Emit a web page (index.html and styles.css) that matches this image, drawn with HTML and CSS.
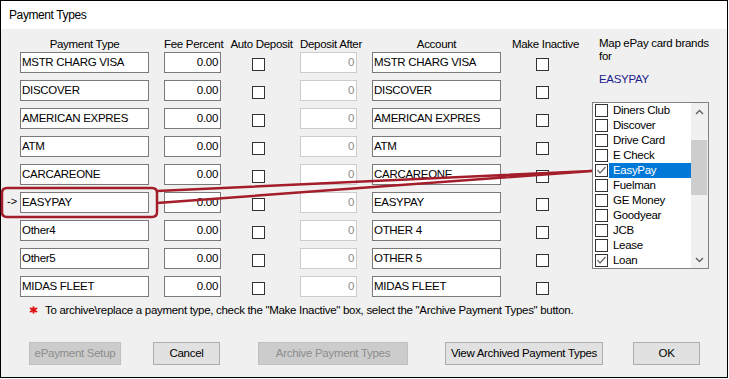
FILE: index.html
```html
<!DOCTYPE html>
<html>
<head>
<meta charset="utf-8">
<link rel="stylesheet" href="styles.css">
</head>
<body>
<div class="window">
  <div class="titlebar">Payment Types</div>
  <div class="content">
    <div class="main">
      <div class="grid">
        <div class="hd c-type">Payment Type</div>
        <div class="hd c-fee">Fee Percent</div>
        <div class="hd c-auto hd-shift">Auto Deposit</div>
        <div class="hd c-dep">Deposit After</div>
        <div class="hd c-acct">Account</div>
        <div class="hd c-inact hd-shift">Make Inactive</div>

        <div class="tb c-type">MSTR CHARG VISA</div><div class="tb num c-fee">0.00</div><div class="cb c-auto"></div><div class="tb num dis c-dep">0</div><div class="tb c-acct">MSTR CHARG VISA</div><div class="cb c-inact"></div>
        <div class="tb c-type">DISCOVER</div><div class="tb num c-fee">0.00</div><div class="cb c-auto"></div><div class="tb num dis c-dep">0</div><div class="tb c-acct">DISCOVER</div><div class="cb c-inact"></div>
        <div class="tb c-type">AMERICAN EXPRES</div><div class="tb num c-fee">0.00</div><div class="cb c-auto"></div><div class="tb num dis c-dep">0</div><div class="tb c-acct">AMERICAN EXPRES</div><div class="cb c-inact"></div>
        <div class="tb c-type">ATM</div><div class="tb num c-fee">0.00</div><div class="cb c-auto"></div><div class="tb num dis c-dep">0</div><div class="tb c-acct">ATM</div><div class="cb c-inact"></div>
        <div class="tb c-type">CARCAREONE</div><div class="tb num c-fee">0.00</div><div class="cb c-auto"></div><div class="tb num dis c-dep">0</div><div class="tb c-acct">CARCAREONE</div><div class="cb c-inact"></div>
        <div class="arrow c-arrow">-&gt;</div><div class="tb c-type">EASYPAY</div><div class="tb num c-fee">0.00</div><div class="cb c-auto"></div><div class="tb num dis c-dep">0</div><div class="tb c-acct">EASYPAY</div><div class="cb c-inact"></div>
        <div class="tb c-type">Other4</div><div class="tb num c-fee">0.00</div><div class="cb c-auto"></div><div class="tb num dis c-dep">0</div><div class="tb c-acct">OTHER 4</div><div class="cb c-inact"></div>
        <div class="tb c-type">Other5</div><div class="tb num c-fee">0.00</div><div class="cb c-auto"></div><div class="tb num dis c-dep">0</div><div class="tb c-acct">OTHER 5</div><div class="cb c-inact"></div>
        <div class="tb c-type">MIDAS FLEET</div><div class="tb num c-fee">0.00</div><div class="cb c-auto"></div><div class="tb num dis c-dep">0</div><div class="tb c-acct">MIDAS FLEET</div><div class="cb c-inact"></div>
      </div>

      <div class="brands">
        <div class="brands-label">Map ePay card brands<br>for</div>
        <div class="brands-name">EASYPAY</div>
        <div class="list">
          <div class="items">
            <div class="item"><span class="lcb"></span><span class="lbl">Diners Club</span></div>
            <div class="item"><span class="lcb"></span><span class="lbl">Discover</span></div>
            <div class="item"><span class="lcb"></span><span class="lbl">Drive Card</span></div>
            <div class="item"><span class="lcb"></span><span class="lbl">E Check</span></div>
            <div class="item sel"><span class="lcb"><svg class="chk" width="11" height="11" viewBox="0 0 11 11"><polyline points="1.5,5 4,8 9.5,2" /></svg></span><span class="lbl">EasyPay</span></div>
            <div class="item"><span class="lcb"></span><span class="lbl">Fuelman</span></div>
            <div class="item"><span class="lcb"></span><span class="lbl">GE Money</span></div>
            <div class="item"><span class="lcb"></span><span class="lbl">Goodyear</span></div>
            <div class="item"><span class="lcb"></span><span class="lbl">JCB</span></div>
            <div class="item"><span class="lcb"></span><span class="lbl">Lease</span></div>
            <div class="item"><span class="lcb"><svg class="chk" width="11" height="11" viewBox="0 0 11 11"><polyline points="1.5,5 4,8 9.5,2" /></svg></span><span class="lbl">Loan</span></div>
          </div>
          <div class="sb">
            <div class="sb-btn"><svg width="9" height="6" viewBox="0 0 9 6"><polyline points="1,5 4.5,1.5 8,5" /></svg></div>
            <div class="sb-track"><div class="sb-thumb"></div></div>
            <div class="sb-btn"><svg width="9" height="6" viewBox="0 0 9 6"><polyline points="1,1 4.5,4.5 8,1" /></svg></div>
          </div>
        </div>
      </div>
    </div>

    <div class="note">
      <svg class="star" width="9" height="8" viewBox="0 0 9 8"><g><line x1="4.5" y1="0.5" x2="4.5" y2="7.5"/><line x1="1" y1="2" x2="8" y2="6"/><line x1="1" y1="6" x2="8" y2="2"/></g></svg>
      <span>To archive\replace a payment type, check the "Make Inactive" box, select the "Archive Payment Types" button.</span>
    </div>

    <div class="buttons">
      <div class="btn disabled b-epay">ePayment Setup</div>
      <div class="btn b-cancel">Cancel</div>
      <div class="btn disabled b-archive">Archive Payment Types</div>
      <div class="btn b-view">View Archived Payment Types</div>
      <div class="btn b-ok">OK</div>
    </div>
  </div>

  <svg class="callout" width="729" height="379" viewBox="0 0 729 379">
    <path d="M 7 188 H 152 Q 157 188 157 193 V 212 Q 157 217 152 217 H 7 Q 2 217 2 212 V 193 Q 2 188 7 188 Z" />
    <path d="M 157 191 L 592 171 M 157 203 L 592 171" />
  </svg>
</div>
</body>
</html>
```

FILE: styles.css
```css
body {
  margin: 0;
  background: #ffffff;
  font-family: "Liberation Sans", Arial, sans-serif;
  font-size: 11.5px;
  letter-spacing: -0.3px;
  color: #000;
}

.window {
  position: relative;
  width: 728px;
  height: 378px;
  box-sizing: border-box;
  border: 1px solid #000;
  background: #f0f0f0;
}

.titlebar {
  height: 28px;
  line-height: 28px;
  background: #fff;
  padding-left: 8px;
  font-size: 12px;
  letter-spacing: -0.4px;
}

.content {
  padding-top: 8px;
}

.main {
  display: flex;
  align-items: flex-start;
}

.grid {
  display: grid;
  grid-template-columns: 19px 129px 15px 57px 75px 4px 57px 15px 129px 83px;
  grid-template-rows: 15px repeat(9, 28px);
  align-items: start;
}

.c-arrow { grid-column: 1; }
.c-type { grid-column: 2; }
.c-fee { grid-column: 4; }
.c-auto { grid-column: 5; }
.c-dep { grid-column: 7; }
.c-acct { grid-column: 9; }
.c-inact { grid-column: 10; }

.hd {
  line-height: 15px;
  text-align: center;
  white-space: nowrap;
}

.hd-shift {
  padding-left: 6px;
}

.tb {
  box-sizing: border-box;
  height: 21px;
  line-height: 19px;
  border: 1px solid #7a7a7a;
  background: #fff;
  padding: 0 2px 0 1px;
  white-space: nowrap;
  overflow: hidden;
}

.num {
  text-align: right;
}

.dis {
  border-color: #cccccc;
  color: #8a8a8a;
}

.cb {
  justify-self: center;
  width: 13px;
  height: 13px;
  box-sizing: border-box;
  margin-top: 6px;
  border: 1px solid #333;
  background: #fff;
}

.arrow {
  line-height: 19px;
  padding-left: 6px;
  font-size: 11px;
  letter-spacing: 0;
}

.brands {
  margin-left: 8px;
  width: 117px;
}

.brands-label {
  padding-left: 7px;
  line-height: 13px;
  white-space: nowrap;
}

.brands-name {
  padding-left: 7px;
  margin-top: 10px;
  line-height: 13px;
  color: #1c1c8c;
}

.list {
  margin-top: 16px;
  height: 167px;
  box-sizing: border-box;
  border: 1px solid #828282;
  background: #fff;
  display: flex;
}

.items {
  width: 98px;
}

.item {
  height: 15px;
  display: flex;
  align-items: center;
}

.lcb {
  position: relative;
  width: 13px;
  height: 13px;
  box-sizing: border-box;
  margin-left: 2px;
  margin-right: 1px;
  border: 1px solid #333;
  background: #fff;
}

.chk {
  position: absolute;
  left: 0;
  top: 0;
}

.chk polyline {
  fill: none;
  stroke: #6a6a6a;
  stroke-width: 1.2;
}

.lbl {
  flex: 1;
  height: 15px;
  line-height: 15px;
  padding-left: 4px;
  white-space: nowrap;
}

.item.sel .lbl {
  background: #0078d7;
  color: #fff;
}

.sb {
  width: 17px;
  background: #f0f0f0;
  display: flex;
  flex-direction: column;
}

.sb-btn {
  height: 17px;
  display: flex;
  align-items: center;
  justify-content: center;
}

.sb-btn polyline {
  fill: none;
  stroke: #606060;
  stroke-width: 1.4;
}

.sb-track {
  flex: 1;
}

.sb-thumb {
  margin-top: 20px;
  height: 55px;
  margin-left: 0;
  width: 16px;
  background: #cdcdcd;
}

.note {
  margin-top: -1px;
  padding-left: 28px;
  height: 14px;
  display: flex;
  align-items: center;
  white-space: nowrap;
}

.star {
  margin-right: 7px;
}

.star line {
  stroke: #e01010;
  stroke-width: 2;
}

.buttons {
  margin-top: 25px;
  padding-left: 28px;
  display: flex;
}

.btn {
  box-sizing: border-box;
  height: 23px;
  line-height: 21px;
  border: 1px solid #adadad;
  background: #e1e1e1;
  text-align: center;
  white-space: nowrap;
}

.btn.disabled {
  background: #cccccc;
  border-color: #bfbfbf;
  color: #8d8d8d;
}

.b-epay { width: 92px; }
.b-cancel { width: 67px; margin-left: 32px; }
.b-archive { width: 150px; margin-left: 38px; }
.b-view { width: 158px; margin-left: 37px; }
.b-ok { width: 67px; margin-left: 30px; }

.callout {
  position: absolute;
  left: -1px;
  top: -1px;
  pointer-events: none;
}

.callout path {
  fill: none;
  stroke: #a31d2a;
  stroke-width: 2.5;
  stroke-linejoin: round;
}
```
